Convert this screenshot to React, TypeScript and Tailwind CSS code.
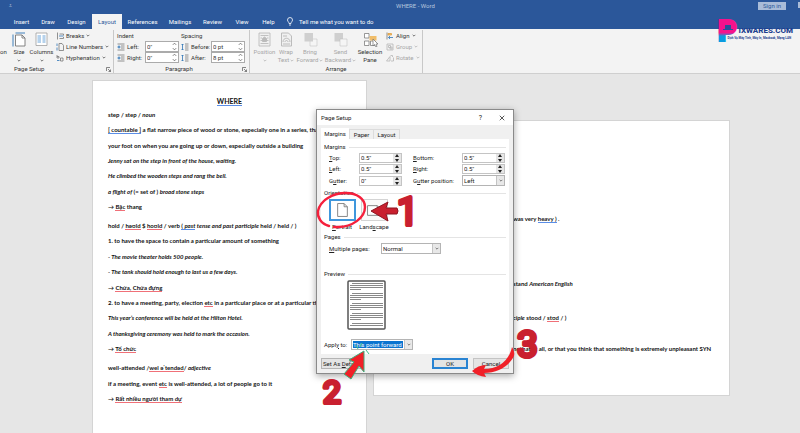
import type { ReactNode } from "react";

const TABS = [
  { name: "Insert", cls: "w-[27px]" },
  { name: "Draw", cls: "w-[26px]" },
  { name: "Design", cls: "w-[31px]" },
  { name: "Layout", cls: "w-[30px] bg-[#f3f3f3] text-[#2b579a]" },
  { name: "References", cls: "w-[41px]" },
  { name: "Mailings", cls: "w-[34px]" },
  { name: "Review", cls: "w-[31px]" },
  { name: "View", cls: "w-[28px]" },
  { name: "Help", cls: "w-[25px]" },
];

function Chevron({ cls = "" }: { cls?: string }) {
  return (
    <svg viewBox="0 0 6 4" className={`h-[3px] w-[4px] shrink-0 ${cls}`} fill="none" stroke="currentColor">
      <path d="M1 1l2 2 2-2" />
    </svg>
  );
}

function Launcher() {
  return (
    <button type="button" aria-label="More settings" className="h-[5px] w-[5px]">
      <svg viewBox="0 0 10 10" fill="none" stroke="#555" strokeWidth="1.4">
        <path d="M1 8V1h7M4 4l5 5M9 5v4H5" />
      </svg>
    </button>
  );
}

function Group({ title, cls, titleCls = "text-center", launcher, children }: { title: string; cls: string; titleCls?: string; launcher?: boolean; children: ReactNode }) {
  return (
    <section className={`flex shrink-0 flex-col border-r border-[#c8c8c8] ${cls}`}>
      <div className="flex h-[35px]">{children}</div>
      <div className="flex h-[8px] items-center px-0.5">
        <span className={`flex-1 ${titleCls}`}>{title}</span>
        {launcher && <Launcher />}
      </div>
    </section>
  );
}

function BigButton({ icon, lines, cls, chevron = "below" }: { icon: ReactNode; lines: string[]; cls: string; chevron?: "below" | "inline" | "none" }) {
  return (
    <button type="button" className={`flex shrink-0 flex-col items-center whitespace-nowrap pt-[2px] leading-[8px] ${cls}`}>
      <span className="mb-px block h-[15px] w-[15px]">{icon}</span>
      {lines.map((l, i) => (
        <span key={l} className="flex items-center gap-px">
          {l}
          {chevron === "inline" && i === lines.length - 1 && <Chevron />}
        </span>
      ))}
      {chevron === "below" && <Chevron cls="mt-[3px]" />}
    </button>
  );
}

function SmallButton({ icon, label, cls = "" }: { icon: ReactNode; label: string; cls?: string }) {
  return (
    <button type="button" className={`flex h-[11px] items-center gap-[2px] whitespace-nowrap ${cls}`}>
      <svg viewBox="0 0 16 16" className="h-[8px] w-[8px] shrink-0" fill="none" strokeWidth="1.6">
        {icon}
      </svg>
      {label}
      <Chevron />
    </button>
  );
}

function RibbonField({ id, label, value, icon, cls }: { id: string; label: string; value: string; icon: ReactNode; cls: string }) {
  return (
    <div className="flex h-[11px] items-center">
      <svg viewBox="0 0 16 16" className="mr-[2px] h-[8px] w-[8px] shrink-0" fill="none" strokeWidth="1.6">
        {icon}
      </svg>
      <label htmlFor={id} className={`shrink-0 ${cls}`}>{label}</label>
      <div className="flex h-[11px] w-[34px] items-center border border-[#ababab] bg-white">
        <input id={id} defaultValue={value} className="w-[24px] bg-transparent pl-px outline-none" />
        <svg viewBox="0 0 6 10" className="ml-auto mr-px h-[9px] w-[5px]" fill="none" stroke="#666">
          <path d="M1 3l2-2 2 2M1 7l2 2 2-2" />
        </svg>
      </div>
    </div>
  );
}

const indentIcon = (
  <>
    <path d="M1 2h14M8 6h7M8 10h7M1 14h14" stroke="#777" />
    <path d="M1 8h6M4 5v6" stroke="#2e75b6" strokeWidth="2" />
  </>
);
const spacingIcon = (
  <>
    <path d="M8 2h7M8 6h7M8 10h7M8 14h7" stroke="#777" />
    <path d="M3 2v12M1 4l2-2 2 2M1 12l2 2 2-2" stroke="#2e75b6" />
  </>
);

function Ribbon() {
  return (
    <div className="flex h-[45px] overflow-hidden border-b border-[#cfcfcf] bg-[#f3f3f3] pt-px text-[6px] leading-[8px] text-[#333]">
      <Group title="Page Setup" cls="w-[114px]" titleCls="pl-[12px]" launcher>
        <span className="w-[9px] pt-[18px]">on</span>
        <BigButton
          cls="w-[20px]"
          lines={["Size"]}
          icon={
            <svg viewBox="0 0 30 30" fill="none" strokeWidth="1.8">
              <path d="M7 6h13l6 6v16H7z" fill="#fff" stroke="#777" />
              <path d="M20 6v6h6" stroke="#777" />
              <path d="M2 5v24M7 2h19" stroke="#2e75b6" />
            </svg>
          }
        />
        <BigButton
          cls="w-[25px]"
          lines={["Columns"]}
          icon={
            <svg viewBox="0 0 30 30" fill="none">
              <path d="M4 2h22v25H4z" fill="#fff" stroke="#999" strokeWidth="1.5" />
              <path d="M7 8h7M7 12h7M7 16h7M7 20h7M17 8h6M17 12h6M17 16h6M17 20h6" stroke="#5b9bd5" strokeWidth="1.8" />
            </svg>
          }
        />
        <div className="flex flex-col pl-[2px]">
          <SmallButton label="Breaks" icon={<><path d="M3 1v14M7 4h8v3M7 13h8v-3" stroke="#777" /><path d="M6 8h9" stroke="#2e75b6" /></>} />
          <SmallButton label="Line Numbers" icon={<><path d="M6 1h6l3 4v10H6z" stroke="#777" /><path d="M2 1v5M2 9v6" stroke="#2e75b6" /></>} />
          <SmallButton label="Hyphenation" icon={<><path d="M2 2v6h4V5H2M9 8h5v6H9z" stroke="#777" /><path d="M2 13h5" stroke="#2e75b6" /></>} />
        </div>
      </Group>

      <Group title="Paragraph" cls="w-[136px]" launcher>
        <div className="flex w-[65px] flex-col pl-[3px] pt-[2px]">
          <span className="mb-px h-[8px]">Indent</span>
          <RibbonField id="ind-left" label="Left:" value={'0"'} icon={indentIcon} cls="w-[18px]" />
          <RibbonField id="ind-right" label="Right:" value={'0"'} icon={indentIcon} cls="w-[18px]" />
        </div>
        <div className="flex flex-col pl-[2px] pt-[2px]">
          <span className="mb-px h-[8px]">Spacing</span>
          <RibbonField id="sp-before" label="Before:" value="0 pt" icon={spacingIcon} cls="w-[20px]" />
          <RibbonField id="sp-after" label="After:" value="8 pt" icon={spacingIcon} cls="w-[20px]" />
        </div>
      </Group>

      <Group title="Arrange" cls="w-[173px]">
        <div className="flex text-[#a6a6a6]">
          <BigButton
            cls="ml-[2px] w-[25px]"
            lines={["Position"]}
            icon={
              <svg viewBox="0 0 30 30" fill="none" stroke="#b5b5b5" strokeWidth="1.6">
                <path d="M4 2h22v26H4z" fill="#f0f0f0" />
                <path d="M7 7h16M7 23h16M7 12h3M20 12h3M7 17h3M20 17h3" />
                <path d="M11 19v-6l4-3 4 3v6z" fill="#bbb" />
              </svg>
            }
          />
          <BigButton
            cls="w-[18px]"
            lines={["Wrap", "Text"]}
            chevron="inline"
            icon={
              <svg viewBox="0 0 30 30" fill="none" stroke="#b5b5b5" strokeWidth="1.8">
                <path d="M5 2h14l6 6v20H5z" fill="#f0f0f0" />
                <path d="M8 8h8M8 24h14M8 20c0-10 14-10 14 0M12 20c0-4 6-4 6 0" />
              </svg>
            }
          />
          <BigButton
            cls="w-[30px]"
            lines={["Bring", "Forward"]}
            chevron="inline"
            icon={
              <svg viewBox="0 0 30 30">
                <path d="M14 14h14v14H14z" fill="#f5f5f5" stroke="#bbb" />
                <path d="M3 2h17v17H3z" fill="#cfcfcf" />
              </svg>
            }
          />
          <BigButton
            cls="w-[31px]"
            lines={["Send", "Backward"]}
            chevron="inline"
            icon={
              <svg viewBox="0 0 30 30">
                <path d="M3 2h17v17H3z" fill="#cfcfcf" />
                <path d="M14 14h14v14H14z" fill="#f5f5f5" stroke="#bbb" />
              </svg>
            }
          />
        </div>
        <BigButton
          cls="w-[28px]"
          lines={["Selection", "Pane"]}
          chevron="none"
          icon={
            <svg viewBox="0 0 30 30" fill="none" stroke="#777" strokeWidth="1.5">
              <path d="M3 3h9v9H3zM3 18h9v9H3zM15 18h9v9h-9z" fill="#fff" />
              <path d="M13 8h14v9H13z" fill="#f0bd6a" stroke="none" />
              <path d="M20 14v14l3-3 3 5 2-1-2-5h4z" fill="#fff" />
            </svg>
          }
        />
        <div className="flex flex-col pl-[2px] text-[#a6a6a6]">
          <SmallButton cls="text-[#333]" label="Align" icon={<><path d="M2 1v14" stroke="#777" /><path d="M4 3h7v3H4z" fill="#f0bd6a" stroke="#e0a040" /><path d="M14 11H5M8 8l-3 3 3 3" stroke="#2e75b6" /></>} />
          <SmallButton label="Group" icon={<path d="M2 2h12v12H2zM5 5h4v4H5zM8 8h4v4H8z" stroke="#b5b5b5" />} />
          <SmallButton label="Rotate" icon={<path d="M1 14h7V5zM10 14h5V7M9 3h4v3" stroke="#b5b5b5" />} />
        </div>
      </Group>
    </div>
  );
}

function Header() {
  return (
    <header className="bg-[#2b579a] text-[6px] text-white">
      <div className="flex h-[14px] items-start pt-[2px] leading-[8px]">
        <span className="flex-1 pl-[9px] text-[5px] leading-[7px]">⩡</span>
        <h1 className="pl-[22px] text-[#b7c7df]">WHERE - Word</h1>
        <div className="flex flex-1 justify-end">
          <button type="button" className="h-[8px] w-[28px] bg-[#a9bcd8] text-[#2b579a]">Sign in</button>
          <span className="ml-[12px] h-[6px] w-[2px] border border-[#a9bcd8]" />
        </div>
      </div>
      <nav className="flex h-[15px] items-center pl-[8px]">
        {TABS.map((t) => (
          <button key={t.name} type="button" className={`h-full shrink-0 text-center ${t.cls}`}>
            {t.name}
          </button>
        ))}
        <svg viewBox="0 0 12 18" className="ml-[6px] mr-[6px] h-[9px] w-[6px]" fill="none" stroke="#fff" strokeWidth="1.6">
          <path d="M4 13c0-3-3-4-3-7a5 5 0 0110 0c0 3-3 4-3 7zM4 16h4" />
        </svg>
        <span className="shrink-0">Tell me what you want to do</span>
      </nav>
    </header>
  );
}

// spelling (red) and grammar (blue) marks
function Err({ children }: { children: ReactNode }) {
  return <span className="border-b border-[#f07078]">{children}</span>;
}
function Gram({ children }: { children: ReactNode }) {
  return <span className="border-b border-[#5b8ee6]">{children}</span>;
}

function Document() {
  return (
    <main className="flex items-start pl-[92px] pt-[6px] font-['Lato',sans-serif] text-[6px] font-bold leading-[9px] text-[#111]">
      <article className="h-[360px] w-[275px] shrink-0 overflow-hidden whitespace-nowrap border border-b-0 border-[#d4d4d4] bg-white pl-[15px] pt-[15px]">
        <h2 className="pr-[15px] text-center text-[7px] leading-[11px]">
          <Gram>WHERE</Gram>
        </h2>
        <div className="mt-[3px] flex h-[101px] flex-col justify-between">
          <p>step / step / <i>noun</i></p>
          <p><Gram>[ countable ]</Gram> a flat narrow piece of wood or stone, especially one in a series, tha</p>
          <p>your foot on when you are going up or down, especially outside a building</p>
          <p><i>Jenny sat on the step in front of the house, waiting.</i></p>
          <p><i>He climbed the wooden steps and rang the bell.</i></p>
          <p><i>a flight of</i> (= set of ) <i>broad stone steps</i></p>
          <p>→ <Err>Bậc</Err> thang</p>
        </div>
        <div className="mt-[10px] flex h-[132px] flex-col justify-between">
          <p>hold / <Err>həʊld</Err> $ <Err>hoʊld</Err> / verb <Gram>( <i>past</i></Gram> <i>tense and past participle</i> held / held / )</p>
          <p>1. to have the space to contain a particular amount of something</p>
          <p><i>- The movie theater holds 500 people.</i></p>
          <p><i>- The tank should hold enough to last us a few days.</i></p>
          <p>→ <Err>Chứa, Chứa đựng</Err></p>
          <p>2. to have a meeting, party, election <Err>etc</Err> in a particular place or at a particular tim</p>
          <p><i>This year’s conference will be held at the Hilton Hotel.</i></p>
          <p><i>A thanksgiving ceremony was held to mark the occasion.</i></p>
          <p>→ <Err>Tổ chức</Err></p>
        </div>
        <div className="mt-[10px] flex h-[40px] flex-col justify-between">
          <p>well-attended /<Err>wel əˈtendəd</Err>/ <i>adjective</i></p>
          <p>if a meeting, event <Err>etc</Err> is well-attended, a lot of people go to it</p>
          <p>→ <Err>Rất nhiều người tham dự</Err></p>
        </div>
      </article>
      <article className="ml-[6px] mt-[40px] h-[276px] w-[357px] shrink-0 whitespace-nowrap border border-[#d4d4d4] bg-white pl-[139px] pt-[93px]">
        <p>was very <Gram>heavy )</Gram> .</p>
        <p className="mt-[56px]">stand <i>American English</i></p>
        <p className="mt-[25px]"><i>ciple</i> stood / <Err>stʊd</Err> / )</p>
        <p className="mt-[22px]">nothat at all, or that you think that something is extremely unpleasant SYN</p>
      </article>
    </main>
  );
}

function Legend({ children }: { children: ReactNode }) {
  return (
    <div className="flex h-[8px] items-center gap-[3px]">
      <span>{children}</span>
      <span className="h-px flex-1 bg-[#e4e4e4]" />
    </div>
  );
}

function Spin({ id, label, value, cls }: { id: string; label: ReactNode; value: string; cls: string }) {
  return (
    <div className="flex items-center">
      <label htmlFor={id} className={cls}>{label}</label>
      <div className="flex h-[10px] w-[43px] border border-[#c4c4c4] bg-white">
        <input id={id} defaultValue={value} className="w-[33px] bg-transparent pl-px outline-none" />
        <svg viewBox="0 0 8 8" className="h-[8px] w-[8px] bg-[#e6e6e6]" fill="#222">
          <path d="M4 0l2 3H2zM4 8l2-3H2z" />
        </svg>
      </div>
    </div>
  );
}

function Drop({ id, value, cls, selected }: { id: string; value: string; cls: string; selected?: boolean }) {
  return (
    <div className={`flex h-[11px] border border-[#b4b4b4] bg-white ${cls}`}>
      <select id={id} className={`m-px min-w-0 flex-1 appearance-none leading-[7px] outline-none ${selected ? "bg-[#0a74d0] text-white" : "bg-white"}`}>
        <option>{value}</option>
      </select>
      <span className="flex w-[8px] items-center justify-center border-l border-[#c4c4c4] bg-[#e8e8e8] text-[#444]">
        <Chevron />
      </span>
    </div>
  );
}

function PageSetupDialog() {
  return (
    <div
      role="dialog"
      aria-label="Page Setup"
      className="absolute left-[316px] top-[109px] flex w-[198px] flex-col border border-[#8a8a8a] bg-[#f0f0f0] text-[6px] leading-[8px] text-[#222] shadow-[0_2px_7px_rgba(0,0,0,0.35)]"
    >
      <div className="flex h-[15px] items-center bg-white pl-[4px] pr-[8px]">
        <span className="flex-1">Page Setup</span>
        <button type="button" aria-label="Help" className="mr-[17px] text-[7px]">?</button>
        <button type="button" aria-label="Close" className="h-[6px] w-[6px]">
          <svg viewBox="0 0 8 8" stroke="#222" fill="none"><path d="M1 1l6 6M7 1L1 7" /></svg>
        </button>
      </div>
      <div className="mt-[3px] flex h-[11px] items-end pl-[4px]">
        <button type="button" className="h-[11px] w-[28px] bg-white">Margins</button>
        <button type="button" className="h-[10px] w-[25px] border border-b-0 border-[#dcdcdc]">Paper</button>
        <button type="button" className="h-[10px] w-[26px] border border-b-0 border-l-0 border-[#dcdcdc]">Layout</button>
      </div>
      <div className="mx-[4px] bg-white px-[3px] pb-[4px] pt-[4px]">
        <Legend>Margins</Legend>
        <div className="mt-[2px] grid grid-cols-[84px_1fr] gap-y-[1px] pl-[5px]">
          <Spin id="top" label={<><u>T</u>op:</>} value={'0.5"'} cls="w-[30px]" />
          <Spin id="bottom" label={<><u>B</u>ottom:</>} value={'0.5"'} cls="w-[49px]" />
          <Spin id="left" label={<><u>L</u>eft:</>} value={'0.5"'} cls="w-[30px]" />
          <Spin id="right" label={<><u>R</u>ight:</>} value={'0.5"'} cls="w-[49px]" />
          <Spin id="gutter" label={<>G<u>u</u>tter:</>} value={'0"'} cls="w-[30px]" />
          <div className="flex items-center">
            <label htmlFor="gpos" className="w-[49px] whitespace-nowrap">G<u>u</u>tter position:</label>
            <Drop id="gpos" value="Left" cls="w-[43px]" />
          </div>
        </div>
        <div className="mt-[3px]"><Legend>Orientation</Legend></div>
        <div className="mt-[2px] flex pl-[4px] text-center">
          <button type="button" className="w-[28px]">
            <span className="mx-auto flex h-[22px] w-[27px] items-center justify-center border-2 border-[#3f97dc] bg-white">
              <svg viewBox="0 0 20 26" className="h-[14px] w-[11px]" fill="#fff" stroke="#777" strokeWidth="1.6">
                <path d="M1 1h12l6 6v18H1zM13 1v6h6" />
              </svg>
            </span>
            <span className="mt-[2px] block"><u>P</u>ortrait</span>
          </button>
          <button type="button" className="ml-[3px] w-[30px]">
            <span className="mx-auto flex h-[22px] w-[27px] items-center justify-center border border-[#d4d4d4] bg-[#fafafa]">
              <svg viewBox="0 0 26 20" className="h-[11px] w-[14px]" fill="#fff" stroke="#777" strokeWidth="1.6">
                <path d="M1 1h18l6 6v12H1zM19 1v6h6" />
              </svg>
            </span>
            <span className="mt-[2px] block">Land<u>s</u>cape</span>
          </button>
        </div>
        <div className="mt-[2px]"><Legend>Pages</Legend></div>
        <div className="mt-[2px] flex items-center pl-[5px]">
          <label htmlFor="multi" className="w-[52px] whitespace-nowrap"><u>M</u>ultiple pages:</label>
          <Drop id="multi" value="Normal" cls="w-[60px]" />
        </div>
        <div className="mt-[16px]"><Legend>Preview</Legend></div>
        <svg viewBox="0 0 39 50" className="ml-[23px] mt-[2px] h-[50px] w-[39px]">
          <rect x="1" y="1" width="37" height="48" rx="1" fill="#fff" stroke="#555" strokeWidth="1.5" />
          {[4, 14, 24, 34].map((y) => (
            <path key={y} d={`M5 ${y - 0.5}h31M3 ${y + 1.5}h33M3 ${y + 3.5}h33M3 ${y + 5.5}h11`} stroke="#888" />
          ))}
          <path d="M5 43.5h31M3 45.5h33" stroke="#888" />
        </svg>
        <div className="mt-[9px] flex items-center">
          <label htmlFor="apply" className="w-[27px] whitespace-nowrap">Appl<u>y</u> to:</label>
          <Drop id="apply" value="This point forward" cls="w-[62px]" selected />
        </div>
      </div>
      <div className="flex h-[19px] items-center gap-[5px] px-[4px]">
        <button type="button" className="h-[11px] w-[42px] whitespace-nowrap border border-[#b4b4b4] bg-[#e4e4e4]">Set As <u>D</u>efault</button>
        <button type="button" className="ml-auto h-[11px] w-[36px] border-2 border-[#2a84d2] bg-[#e4e4e4] leading-[7px]">OK</button>
        <button type="button" className="h-[11px] w-[36px] border border-[#c4c4c4] bg-[#e4e4e4]">Cancel</button>
      </div>
    </div>
  );
}

// hand-drawn step marks laid over the window
function Marks() {
  return (
    <svg viewBox="0 0 240 230" className="pointer-events-none absolute left-[310px] top-[185px] h-[230px] w-[240px]" fill="none">
      <path d="M19 41c-8-2-12-9-11-15 2-10 14-18 28-18 11 0 19 6 19 14 0 11-13 20-27 20l-4 0" stroke="#f5203c" strokeWidth="2.4" strokeLinecap="round" />
      <path d="M61 26l17-9-2 6h11q2 3 0 6H76l2 7z" fill="#c9202f" stroke="#8f1420" />
      <path d="M54 166l-15 9 5 2-10 12 7 5 8-13 5 6z" fill="#f02028" stroke="#3fae7c" strokeWidth="1" />
      <path d="M46 160l2 4M52 158l-2 4M56 165l3 4" stroke="#3fc08c" strokeWidth="1" />
      <path d="M162 186q6-6 14-6l-2 4c14 0 25-8 28-22q3 4 2 9c-5 10-16 17-30 17l2 4q-9-1-14-6z" fill="#f02028" />
      <g fill="#c9202f" stroke="#c9202f" strokeLinejoin="round" strokeWidth="4" fontFamily="Roboto, sans-serif" fontWeight="400">
        <text x="87" y="40" fontSize="38">1</text>
        <text x="13" y="218" fontSize="32">2</text>
        <text x="207" y="172" fontSize="37">3</text>
      </g>
    </svg>
  );
}

function Logo() {
  return (
    <div className="absolute right-[7px] top-[17px] flex items-start text-[#1d3f8f]">
      <svg viewBox="0 0 20 26" className="h-[26px] w-[20px] overflow-visible">
        <defs>
          <linearGradient id="p" x1="0" y1="0" x2="0" y2="1">
            <stop offset="0.55" stopColor="#f5128c" />
            <stop offset="0.65" stopColor="#0a9be0" />
          </linearGradient>
        </defs>
        <text x="0" y="24" fontSize="29" fontWeight="900" fontFamily="Roboto, sans-serif" fill="url(#p)" stroke="url(#p)" strokeWidth="2">P</text>
        <path d="M7 8h6v4h2v1H5v-1h2z" fill="#2b4f9a" />
      </svg>
      <div className="whitespace-nowrap pt-[10px]">
        <div className="text-[8px] font-extrabold leading-[8px]">IXWARES.COM</div>
        <div className="-ml-[11px] mt-px text-[3px] font-bold leading-[4px]">Dịch Vụ Máy Tính, Máy In, Macbook, Mạng LAN</div>
      </div>
    </div>
  );
}

export default function App() {
  return (
    <div className="relative min-h-screen overflow-hidden bg-[#e6e6e6] font-['Roboto',sans-serif]">
      <Header />
      <Ribbon />
      <Document />
      <PageSetupDialog />
      <Marks />
      <Logo />
    </div>
  );
}
